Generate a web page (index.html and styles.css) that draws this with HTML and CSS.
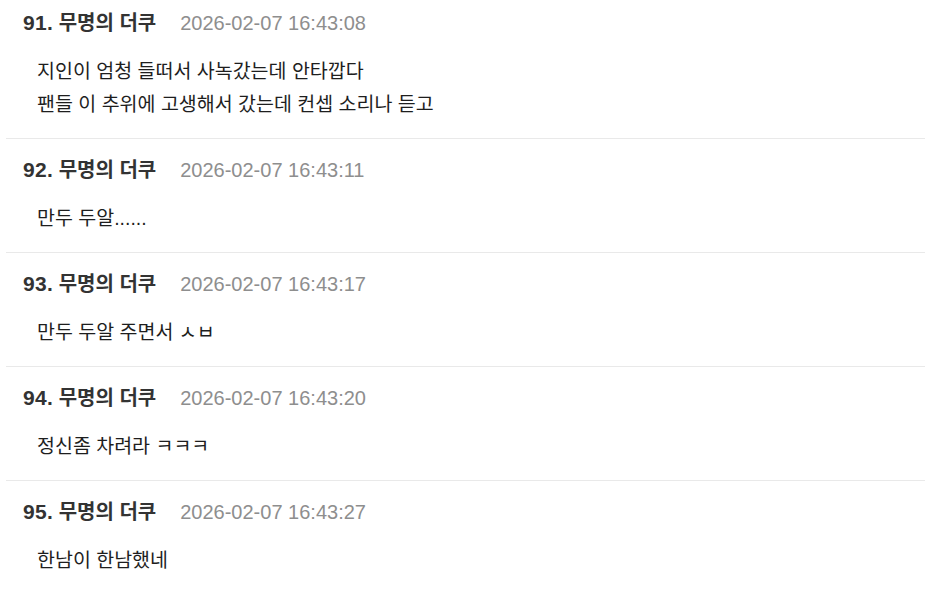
FILE: index.html
```html
<!DOCTYPE html>
<html lang="ko">
<head>
<meta charset="utf-8">
<title>댓글</title>
<link rel="stylesheet" href="styles.css">
</head>
<body>
<ul class="comments">
  <li class="comment">
    <div class="head"><span class="name"><span class="num">91.</span> 무명의 더쿠</span><span class="date">2026-02-07 16:43:08</span></div>
    <div class="text"><p>지인이 엄청 들떠서 사녹갔는데 안타깝다</p><p>팬들 이 추위에 고생해서 갔는데 컨셉 소리나 듣고</p></div>
  </li>
  <li class="comment">
    <div class="head"><span class="name"><span class="num">92.</span> 무명의 더쿠</span><span class="date">2026-02-07 16:43:11</span></div>
    <div class="text"><p>만두 두알......</p></div>
  </li>
  <li class="comment">
    <div class="head"><span class="name"><span class="num">93.</span> 무명의 더쿠</span><span class="date">2026-02-07 16:43:17</span></div>
    <div class="text"><p>만두 두알 주면서 ㅅㅂ</p></div>
  </li>
  <li class="comment">
    <div class="head"><span class="name"><span class="num">94.</span> 무명의 더쿠</span><span class="date">2026-02-07 16:43:20</span></div>
    <div class="text"><p>정신좀 차려라 ㅋㅋㅋ</p></div>
  </li>
  <li class="comment">
    <div class="head"><span class="name"><span class="num">95.</span> 무명의 더쿠</span><span class="date">2026-02-07 16:43:27</span></div>
    <div class="text"><p>한남이 한남했네</p></div>
  </li>
</ul>
</body>
</html>
```

FILE: styles.css
```css
html, body {
  margin: 0;
  padding: 0;
  background: #ffffff;
}
body {
  font-family: "Liberation Sans", "Noto Sans CJK KR", sans-serif;
  color: #222222;
  overflow: hidden;
}
.comments {
  list-style: none;
  margin: 0 0 0 6px;
  padding: 0;
}
.comment {
  padding: 17px 0 17px 17px;
  border-bottom: 1px solid #e9e9e9;
}
.comment:first-child {
  padding-top: 9px;
}
.comment:last-child {
  border-bottom: none;
}
.head {
  display: flex;
  align-items: center;
  gap: 24px;
  height: 28px;
  line-height: 28px;
}
.name {
  font-weight: 700;
  font-size: 20px;
  color: #333333;
}
.num {
  font-size: 21px;
  letter-spacing: 0.3px;
}
.date {
  font-size: 20px;
  color: #8e8e8e;
}
.text {
  margin-top: 18px;
  padding-left: 14px;
  font-size: 19.5px;
  line-height: 33px;
  color: #1e1e1e;
}
.text p {
  margin: 0;
}
```
